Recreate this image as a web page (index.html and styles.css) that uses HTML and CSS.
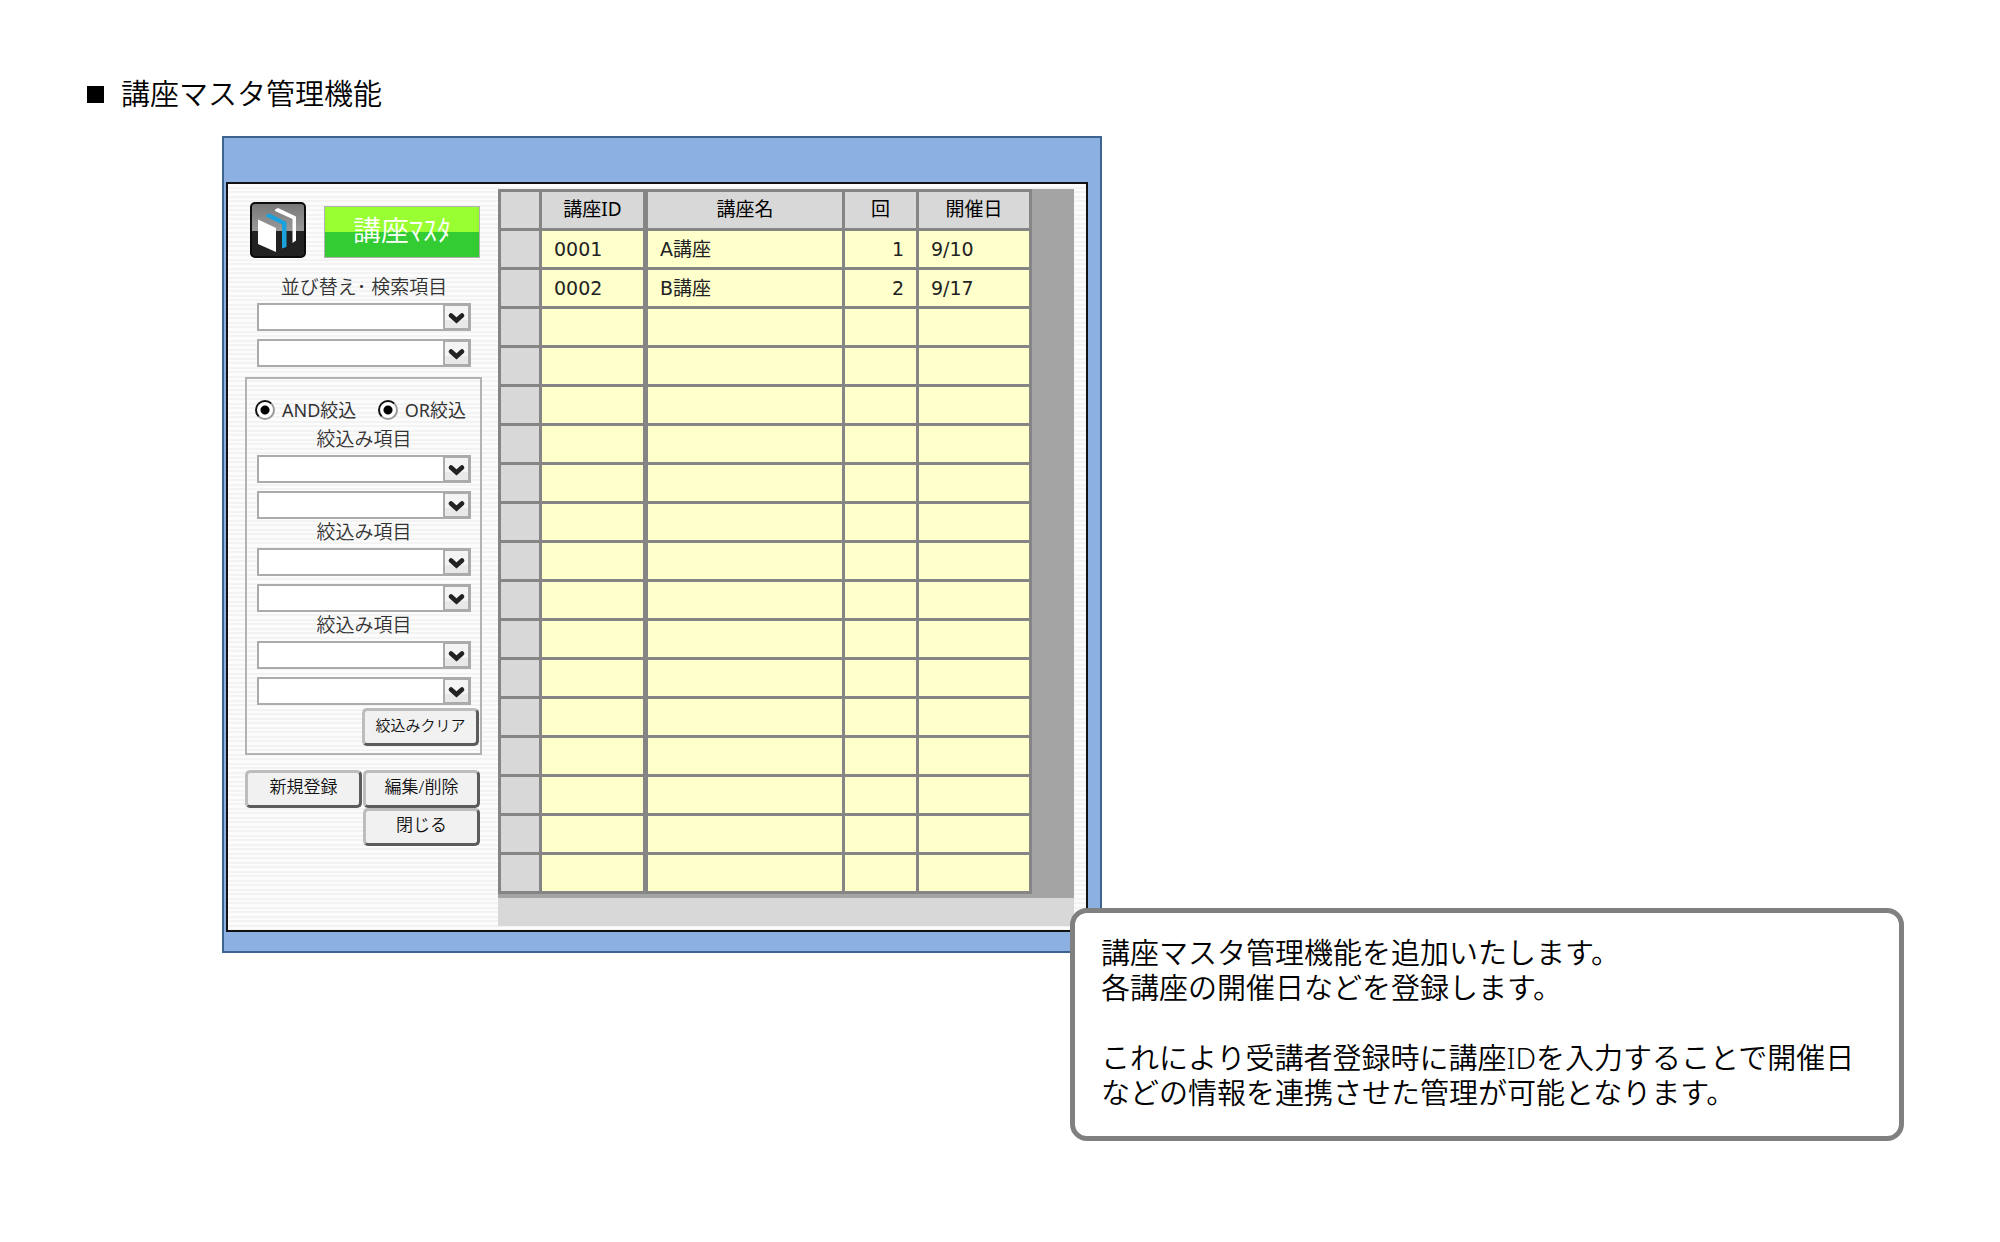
FILE: index.html
```html
<!DOCTYPE html>
<html lang="ja">
<head>
<meta charset="utf-8">
<meta name="viewport" content="width=device-width, initial-scale=1">
<title>講座マスタ管理機能</title>
<link rel="stylesheet" href="styles.css">
</head>
<body>
<svg class="sprite" width="0" height="0" aria-hidden="true">
  <symbol id="chevron" viewBox="0 0 28 28">
    <rect x="0" y="0" width="28" height="28" fill="#ababab"/>
    <rect x="2" y="3" width="23" height="22" fill="#f4f4f4"/>
    <rect x="2" y="17" width="23" height="8" fill="#e8e8e8"/>
    <path d="M8 12.500 L13.500 17.500 L19 12.500" fill="none" stroke="#222" stroke-width="4.600" stroke-linecap="round"/>
  </symbol>
</svg>
<main class="page">
  <h1 class="heading"><span class="square"></span>講座マスタ管理機能</h1>

  <section class="window">
    <div class="client">
      <form class="sidebar">
        <div class="brand">
          <svg class="logo" viewBox="0 0 56 56" aria-hidden="true">
            <defs>
              <linearGradient id="gloss" x1="0" y1="0" x2="0" y2="1">
                <stop offset="0" stop-color="#777"/>
                <stop offset="1" stop-color="#9a9a9a"/>
              </linearGradient>
            </defs>
            <rect x="1" y="1" width="54" height="54" rx="4" fill="#222"/>
            <path d="M1 29V5a4 4 0 0 1 4-4h46a4 4 0 0 1 4 4v24z" fill="url(#gloss)"/>
            <rect x="1" y="1" width="54" height="54" rx="4" fill="none" stroke="#0c0c0c" stroke-width="2"/>
            <path d="M8 17.500 L26 26 V50 L8 42z" fill="#fff"/>
            <path d="M16 13 L19.500 11.500 L36.500 20 V45 L32 46.500 V22.500 L16 14.500z" fill="#1ba1dc"/>
            <path d="M25 7.500 L28 6 L46 14.500 V38.500 L42.500 41 V17 L25 9z" fill="#fff"/>
          </svg>
          <h2 class="title">講座ﾏｽﾀ</h2>
        </div>

        <div class="group sort">
          <label class="caption" for="sort1">並び替え･ 検索項目</label>
          <span class="combo"><select id="sort1"><option></option></select><svg class="arrow"><use href="#chevron"/></svg></span>
          <span class="combo"><select aria-label="並び替え 2"><option></option></select><svg class="arrow"><use href="#chevron"/></svg></span>
        </div>

        <div class="filter">
          <div class="modes">
            <label class="mode"><input type="radio" name="and" checked>AND絞込</label>
            <label class="mode"><input type="radio" name="or" checked>OR絞込</label>
          </div>
          <div class="group">
            <label class="caption" for="filter1">絞込み項目</label>
            <span class="combo"><select id="filter1"><option></option></select><svg class="arrow"><use href="#chevron"/></svg></span>
            <span class="combo"><select aria-label="絞込み値 1"><option></option></select><svg class="arrow"><use href="#chevron"/></svg></span>
          </div>
          <div class="group">
            <label class="caption" for="filter2">絞込み項目</label>
            <span class="combo"><select id="filter2"><option></option></select><svg class="arrow"><use href="#chevron"/></svg></span>
            <span class="combo"><select aria-label="絞込み値 2"><option></option></select><svg class="arrow"><use href="#chevron"/></svg></span>
          </div>
          <div class="group">
            <label class="caption" for="filter3">絞込み項目</label>
            <span class="combo"><select id="filter3"><option></option></select><svg class="arrow"><use href="#chevron"/></svg></span>
            <span class="combo"><select aria-label="絞込み値 3"><option></option></select><svg class="arrow"><use href="#chevron"/></svg></span>
          </div>
          <button type="button" class="button clear">絞込みクリア</button>
        </div>

        <div class="actions">
          <button type="button" class="button">新規登録</button>
          <button type="button" class="button">編集/削除</button>
          <button type="button" class="button close">閉じる</button>
        </div>
      </form>

      <div class="sheet">
        <div class="view">
          <table class="courses">
            <colgroup><col class="c-mark"><col class="c-id"><col class="c-name"><col class="c-count"><col class="c-date"></colgroup>
            <thead>
              <tr><th></th><th class="thick">講座ID</th><th>講座名</th><th>回</th><th>開催日</th></tr>
            </thead>
            <tbody>
              <tr><th></th><td class="thick">0001</td><td>A講座</td><td class="num">1</td><td>9/10</td></tr>
              <tr><th></th><td class="thick">0002</td><td>B講座</td><td class="num">2</td><td>9/17</td></tr>
              <tr><th></th><td class="thick"></td><td></td><td></td><td></td></tr>
              <tr><th></th><td class="thick"></td><td></td><td></td><td></td></tr>
              <tr><th></th><td class="thick"></td><td></td><td></td><td></td></tr>
              <tr><th></th><td class="thick"></td><td></td><td></td><td></td></tr>
              <tr><th></th><td class="thick"></td><td></td><td></td><td></td></tr>
              <tr><th></th><td class="thick"></td><td></td><td></td><td></td></tr>
              <tr><th></th><td class="thick"></td><td></td><td></td><td></td></tr>
              <tr><th></th><td class="thick"></td><td></td><td></td><td></td></tr>
              <tr><th></th><td class="thick"></td><td></td><td></td><td></td></tr>
              <tr><th></th><td class="thick"></td><td></td><td></td><td></td></tr>
              <tr><th></th><td class="thick"></td><td></td><td></td><td></td></tr>
              <tr><th></th><td class="thick"></td><td></td><td></td><td></td></tr>
              <tr><th></th><td class="thick"></td><td></td><td></td><td></td></tr>
              <tr><th></th><td class="thick"></td><td></td><td></td><td></td></tr>
              <tr><th></th><td class="thick"></td><td></td><td></td><td></td></tr>
            </tbody>
          </table>
        </div>
      </div>
    </div>
  </section>

  <aside class="note">
    <p>講座マスタ管理機能を追加いたします。<br>各講座の開催日などを登録します。</p>
    <p>これにより受講者登録時に講座IDを入力することで開催日などの情報を連携させた管理が可能となります。</p>
  </aside>
</main>
</body>
</html>
```
FILE: styles.css
```css
* {
  box-sizing: border-box;
}

body {
  margin: 0;
  background: #fff;
  color: #000;
  font-family: "Noto Sans", "Noto Sans CJK JP", sans-serif;
  font-weight: 350;
}

.sprite {
  display: none;
}

.page {
  padding: 76px 0 100px;
}

.heading {
  display: flex;
  align-items: center;
  gap: 17px;
  margin: 0 0 24px 87px;
  font-size: 29px;
  line-height: 36px;
  font-weight: 350;
}

.square {
  width: 17px;
  height: 17px;
  background: #000;
}

/* application window */
.window {
  width: 44%;
  min-width: 879px;
  margin-left: 11.1%;
  padding: 44px 12px 19px 2px;
  border: 2px solid #3d638f;
  background: #8db0e2;
}

.client {
  display: flex;
  gap: 16px;
  padding: 5px 12px 4px 17px;
  border: 2px solid #111;
  background: repeating-linear-gradient(#fcfcfc 0 3px, #f3f3f3 3px 5px, #fcfcfc 5px 7px, #f3f3f3 7px 9px);
}

.sidebar {
  flex: 0 0 237px;
  padding-top: 13px;
  color: #333;
}

.brand {
  display: flex;
  justify-content: space-between;
  padding: 0 2px 0 5px;
}

.logo {
  width: 56px;
  height: 56px;
}

.title {
  width: 156px;
  margin: 4px 0 0;
  border: 1px solid #b0b0b0;
  background: linear-gradient(#99ff33 50%, #33cc33 50%);
  color: #fff;
  font-size: 28px;
  line-height: 46px;
  font-weight: 350;
  text-align: center;
}

.group {
  display: flex;
  flex-direction: column;
  gap: 8px;
}

.sort {
  margin: 17px 11px 10px 12px;
}

.caption {
  margin-bottom: -4px;
  font-size: 19px;
  line-height: 24px;
  text-align: center;
}

.combo {
  display: grid;
  grid-template-columns: 1fr 28px;
  height: 28px;
}

.combo select {
  grid-area: 1 / 1 / 2 / 3;
  width: 100%;
  appearance: none;
  border: 2px solid #ababab;
  border-radius: 0;
  background: #fff;
}

.arrow {
  grid-area: 1 / 2;
  width: 28px;
  height: 28px;
  pointer-events: none;
}

.filter {
  display: flex;
  flex-direction: column;
  gap: 1px;
  padding: 19px 9px 6px 10px;
  border: 2px solid #b3b3b3;
}

.modes {
  display: flex;
  justify-content: space-between;
  margin: 0 5px 4px -2px;
}

.mode {
  display: flex;
  align-items: center;
  gap: 7px;
  font-size: 18px;
  font-weight: 400;
  line-height: 24px;
}

.mode input {
  appearance: none;
  width: 20px;
  height: 20px;
  margin: 0;
  border: 2px solid;
  border-color: #111 #999 #999 #111;
  border-radius: 50%;
  background: radial-gradient(circle, #000 4px, #fff 5px);
}

.button {
  height: 38px;
  padding: 0 0 4px;
  border: 3px solid;
  border-color: #bdbdbd #5c5c5c #5c5c5c #bdbdbd;
  border-radius: 5px;
  background: #f1f1f1;
  color: #111;
  font: 350 17px/24px "Noto Sans", "Noto Sans CJK JP", sans-serif;
}

.clear {
  width: 117px;
  margin: 2px -8px 1px auto;
  font-size: 15px;
}

.actions {
  display: grid;
  grid-template-columns: 117px 117px;
  column-gap: 1px;
  margin-top: 15px;
}

.close {
  grid-column: 2;
}

/* course sheet */
.sheet {
  flex: 1;
  padding-bottom: 28px;
  background: #d8d8d8;
}

.view {
  padding-bottom: 4px;
  background: #a4a4a4;
}

.courses {
  width: 534px;
  table-layout: fixed;
  border-collapse: collapse;
  font-family: "DejaVu Sans", "Noto Sans CJK JP", sans-serif;
  font-size: 19px;
  font-weight: 400;
  line-height: 24px;
}

.c-mark { width: 41px; }
.c-id { width: 105px; }
.c-name { width: 198px; }
.c-count { width: 74px; }

.courses tr {
  height: 39px;
}

.courses th,
.courses td {
  padding: 0 12px;
  border: 3px solid #858585;
}

.courses th {
  padding-bottom: 2px;
  background: #d8d8d8;
  font-family: "Noto Sans", "Noto Sans CJK JP", sans-serif;
  font-weight: 400;
}

.courses td {
  background: #ffffcc;
  color: #222;
}

.courses .thick {
  border-right-width: 5px;
}

.courses .num {
  text-align: right;
}

/* explanation laid over the window's corner */
.note {
  position: relative;
  width: 41.7%;
  margin: -45px 0 0 53.5%;
  padding: 22px 24px 26px 26px;
  border: 5px solid #808080;
  border-radius: 17px;
  background: #fff;
  font-size: 29px;
  line-height: 35px;
}

.note p {
  margin: 0 0 35px;
}

.note p:last-child {
  margin: 0;
}
```
